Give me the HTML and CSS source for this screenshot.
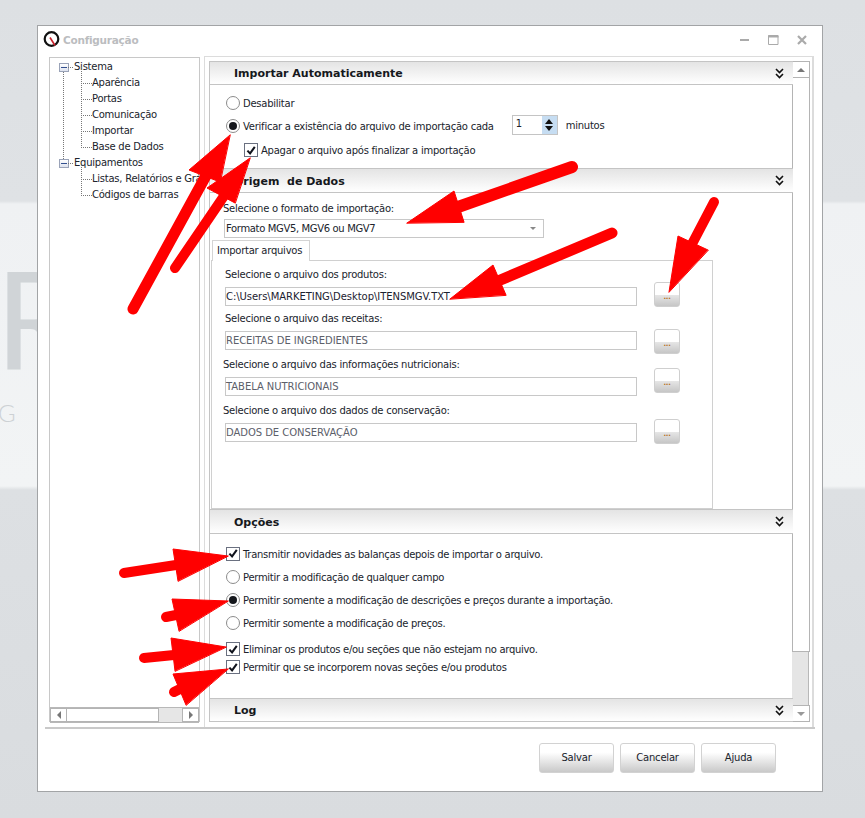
FILE: index.html
```html
<!DOCTYPE html>
<html lang="pt-BR">
<head>
<meta charset="utf-8">
<title>Configuração</title>
<link rel="stylesheet" href="styles.css">
</head>
<body>
<svg class="defs" width="0" height="0">
  <symbol id="chev" viewBox="0 0 9 11"><path d="M1 1l3.5 3.5L8 1M1 6l3.5 3.5L8 6" fill="none" stroke="#111" stroke-width="1.6"/></symbol>
  <symbol id="tick" viewBox="0 0 13 13"><path d="M2.6 6.6l2.9 3L10.6 2.6" fill="none" stroke="#10131c" stroke-width="2.2"/></symbol>
</svg>
<div class="logo-r">R</div>
<div class="logo-g">G I</div>
<div class="window">
  <div class="titlebar">
    <svg class="app-icon" width="17" height="17" viewBox="0 0 17 17"><circle cx="8.5" cy="8" r="6.8" fill="none" stroke="#111" stroke-width="2.2"/><path d="M7 6.5l5 8" stroke="#c8202a" stroke-width="1.6"/></svg>
    <span class="title">Configuração</span>
    <div class="controls">
      <svg width="10" height="10" viewBox="0 0 10 10"><path d="M0 5h9" stroke="#aaa" stroke-width="2"/></svg>
      <svg width="11" height="10" viewBox="0 0 11 10"><path d="M.5 .5h9.5v9H.5z" fill="none" stroke="#aaa"/><path d="M0 1.5h10.5" stroke="#aaa" stroke-width="2"/></svg>
      <svg width="10" height="10" viewBox="0 0 10 10"><path d="M1 1l8 8M9 1l-8 8" stroke="#aaa" stroke-width="2.2"/></svg>
    </div>
  </div>
  <div class="main">
    <aside class="tree-panel">
      <ul class="tree">
        <li class="root root-open"><span class="node"><i class="minus"></i>Sistema</span>
          <ul>
            <li>Aparência</li><li>Portas</li><li>Comunicação</li><li>Importar</li><li>Base de Dados</li>
          </ul>
        </li>
        <li class="root"><span class="node"><i class="minus"></i>Equipamentos</span>
          <ul>
            <li>Listas, Relatórios e Gráficos</li><li>Códigos de barras</li>
          </ul>
        </li>
      </ul>
      <div class="hscroll">
        <span class="sbtn"><i class="tri tri-l"></i></span>
        <span class="hthumb"></span>
        <span class="htrack"></span>
        <span class="sbtn"><i class="tri tri-r"></i></span>
      </div>
    </aside>
    <section class="panel">
      <div class="sections">
        <header class="shead shead-short">Importar Automaticamente<svg class="chev" width="9" height="11"><use href="#chev"/></svg></header>
        <div class="sbody body-import">
          <label class="row"><i class="radio"></i>Desabilitar</label>
          <div class="row">
            <i class="radio on"></i>Verificar a existência do arquivo de importação cada
            <span class="spin"><span class="spin-val">1</span><span class="spin-btn"><i class="tri tri-u"></i><i class="tri tri-d"></i></span></span>
            <span class="unit">minutos</span>
          </div>
          <label class="row row-sub"><i class="check"><svg width="13" height="13"><use href="#tick"/></svg></i>Apagar o arquivo após finalizar a importação</label>
        </div>
        <header class="shead">Origem&nbsp; de Dados<svg class="chev" width="9" height="11"><use href="#chev"/></svg></header>
        <div class="sbody body-origem">
          <div class="label combo-label">Selecione o formato de importação:</div>
          <div class="combo">Formato MGV5, MGV6 ou MGV7<i class="combo-arrow"></i></div>
          <div class="tab">Importar arquivos</div>
          <div class="tab-panel">
            <div class="file f1">
              <div class="file-col"><div class="label">Selecione o arquivo dos produtos:</div><div class="input dark">C:\Users\MARKETING\Desktop\ITENSMGV.TXT</div></div>
              <button class="browse b1"><span>...</span></button>
            </div>
            <div class="file f2">
              <div class="file-col"><div class="label">Selecione o arquivo das receitas:</div><div class="input">RECEITAS DE INGREDIENTES</div></div>
              <button class="browse b2"><span>...</span></button>
            </div>
            <div class="file f3">
              <div class="file-col"><div class="label shift">Selecione o arquivo das informações nutricionais:</div><div class="input">TABELA NUTRICIONAIS</div></div>
              <button class="browse b3"><span>...</span></button>
            </div>
            <div class="file f3">
              <div class="file-col"><div class="label shift">Selecione o arquivo dos dados de conservação:</div><div class="input">DADOS DE CONSERVAÇÃO</div></div>
              <button class="browse b4"><span>...</span></button>
            </div>
          </div>
        </div>
        <header class="shead">Opções<svg class="chev" width="9" height="11"><use href="#chev"/></svg></header>
        <div class="sbody body-opcoes">
          <label class="row"><i class="check"><svg width="13" height="13"><use href="#tick"/></svg></i>Transmitir novidades as balanças depois de importar o arquivo.</label>
          <label class="row"><i class="radio"></i>Permitir a modificação de qualquer campo</label>
          <label class="row"><i class="radio on"></i>Permitir somente a modificação de descrições e preços durante a importação.</label>
          <label class="row"><i class="radio"></i>Permitir somente a modificação de preços.</label>
          <label class="row row-tight first-tight"><i class="check"><svg width="13" height="13"><use href="#tick"/></svg></i>Eliminar os produtos e/ou seções que não estejam no arquivo.</label>
          <label class="row row-tight"><i class="check"><svg width="13" height="13"><use href="#tick"/></svg></i>Permitir que se incorporem novas seções e/ou produtos</label>
        </div>
        <header class="shead shead-short">Log<svg class="chev" width="9" height="11"><use href="#chev"/></svg></header>
      </div>
      <div class="vscroll">
        <span class="sbtn sbtn-v"><i class="tri tri-up-g"></i></span>
        <span class="vthumb"></span>
        <span class="vtrack"></span>
        <span class="sbtn sbtn-v"><i class="tri tri-dn-g"></i></span>
      </div>
    </section>
  </div>
  <footer class="actions">
    <button class="btn">Salvar</button>
    <button class="btn">Cancelar</button>
    <button class="btn">Ajuda</button>
  </footer>
</div>
<svg class="arrows" width="865" height="818" viewBox="0 0 865 818">
  <g fill="#ff0000" stroke="#ff0000" stroke-linecap="round">
    <path d="M133 309L208 172" stroke-width="11" fill="none"/><path d="M230 135L189 170L220 182Z" stroke-width="1"/>
    <path d="M175 268L224 196" stroke-width="10" fill="none"/><path d="M250 158L207 188L235 203Z" stroke-width="1"/>
    <path d="M572 167L458 207" stroke-width="12" fill="none"/><path d="M407 223L454 191L464 222Z" stroke-width="1"/>
    <path d="M612 233L498 281" stroke-width="11" fill="none"/><path d="M450 299L493 265L506 295Z" stroke-width="1"/>
    <path d="M714 202L692 244" stroke-width="10" fill="none"/><path d="M669 292L678 236L708 250Z" stroke-width="1"/>
    <path d="M124 573L176 565" stroke-width="10" fill="none"/><path d="M228 556L173 549L178 581Z" stroke-width="1"/>
    <path d="M166 617L176 615" stroke-width="10" fill="none"/><path d="M228 601L172 599L179 631Z" stroke-width="1"/>
    <path d="M144 658L174 655" stroke-width="10" fill="none"/><path d="M226 647L171 638L175 671Z" stroke-width="1"/>
    <path d="M174 692L182 688" stroke-width="10" fill="none"/><path d="M228 669L173 674L186 705Z" stroke-width="1"/>
  </g>
</svg>
</body>
</html>
```
FILE: styles.css
```css
* { box-sizing: border-box; }
html, body { margin: 0; height: 818px; overflow: hidden; }
body {
  position: relative;
  font: 10px/16px "DejaVu Sans", sans-serif;
  letter-spacing: -0.25px;
  color: #20242c;
  background: linear-gradient(#dde0e3 0, #dfe2e5 201px, #eff1f3 204px, #f2f4f5 486px, #dde0e3 490px, #d9dcdf 818px);
}
i { font-style: normal; }
.defs { position: absolute; }
.logo-r {
  position: absolute; left: -5px; top: 238px;
  font: 400 136px/160px Lato, sans-serif; color: #d0d4d7;
}
.logo-g {
  position: absolute; left: -2px; top: 400px;
  font: 300 24px/26px Lato, sans-serif; letter-spacing: 7px; color: #cdd1d4;
}
.window {
  position: relative;
  margin: 25px 0 0 37px;
  width: 786px; height: 767px;
  background: #fff;
  border: 1px solid #a2a4a6;
  display: flex; flex-direction: column;
}
.titlebar { height: 30px; display: flex; align-items: center; padding: 0 15px 0 5px; }
.app-icon { margin-top: -3px; }
.title { margin-left: 3px; font-weight: 700; color: #bbbdbf; font-size: 10.5px; margin-top: -3px; }
.controls { margin-left: auto; display: flex; gap: 18px; margin-top: -2px; }
.main { display: flex; margin-left: 7px; width: 770px; height: 673px; border-bottom: 2px solid #c9c9c9; }
.tree-panel {
  margin: 1px 0 0 4px; width: 151px; height: 665px;
  border: 1px solid #c8c8c8; border-bottom: 0;
  display: flex; flex-direction: column;
}
.tree { list-style: none; margin: 0; padding: 1px 0 0 9px; flex: 1; overflow: hidden; white-space: nowrap; }
.tree ul { list-style: none; margin: 0 0 0 22px; padding: 0; }
.tree .root { position: relative; }
.root-open::before { content: ""; position: absolute; left: 4px; top: 12px; height: 92px; border-left: 1px dotted #777; }
.node { display: flex; align-items: center; height: 16px; }
.minus {
  width: 10px; height: 9px; margin-right: 5px; position: relative;
  border: 1px solid #9aa3b8; background: linear-gradient(#fff, #dde2ee);
}
.minus::before { content: ""; position: absolute; left: 1px; right: 1px; top: 3px; height: 1px; background: #33508f; }
.minus::after { content: ""; position: absolute; left: 8px; top: 3px; width: 5px; border-top: 1px dotted #777; }
.tree ul li { position: relative; height: 16px; padding-left: 11px; }
.tree ul li::before { content: ""; position: absolute; left: 0; top: -8px; width: 10px; height: 16px; border-left: 1px dotted #777; border-bottom: 1px dotted #777; }
.hscroll { display: flex; height: 16px; border: 1px solid #b8b8b8; border-width: 1px 0 1px 0; background: #e6e6e6; margin: 0 0 -1px; }
.sbtn { display: flex; align-items: center; justify-content: center; width: 17px; background: #fff; border: 1px solid #b4b4b4; flex: none; }
.hthumb { width: 92px; background: #fff; border: 1px solid #b4b4b4; border-left: 0; }
.htrack { flex: 1; }
.tri { display: block; width: 0; height: 0; border: 4px solid transparent; }
.tri-l { border-right-color: #777; border-left-width: 0; }
.tri-r { border-left-color: #777; border-right-width: 0; }
.tri-up-g { border-width: 0 4px 4px; border-bottom-color: #777; }
.tri-dn-g { border-width: 4px 4px 0; border-top-color: #999; }
.tri-u { border-width: 0 4px 5px; border-bottom-color: #111; margin-bottom: 2px; }
.tri-d { border-width: 5px 4px 0; border-top-color: #111; }

.panel {
  margin-left: 4px; width: 610px; height: 671px;
  padding: 4px 4px 5px 4px;
  border: 1px solid #dcdcdc; border-bottom: 0; border-right-width: 2px;
  display: flex;
}
.sections { width: 584px; flex: none; border-left: 1px solid #c4c4c4; }
.shead {
  position: relative;
  height: 25px; padding: 2px 0 0 24px;
  display: flex; align-items: center;
  font-weight: 700; font-size: 11px; letter-spacing: 0; color: #16181c;
  background: linear-gradient(#e4e4e4, #fff);
  border-top: 1px solid #c4c4c4; border-bottom: 1px solid #c4c4c4;
}
.shead-short { height: 24px; }
.chev { position: absolute; right: 9px; top: 6px; }
.sbody { border-right: 1px solid #c4c4c4; }
.body-import { height: 83px; padding-top: 6px; }
.body-origem { height: 316px; padding-top: 7px; }
.body-opcoes { height: 164px; padding-top: 8px; letter-spacing: -0.29px; }
.row { display: flex; align-items: center; height: 23px; padding: 2px 0 0 16px; }
.row-sub { height: 24px; padding-left: 34px; margin-top: 1px; }
.row-tight { height: 18px; }
.first-tight { margin-top: 6px; }
.radio {
  width: 14px; height: 14px; margin: -2px 3px 0 0; border-radius: 50%; flex: none;
  border: 1px solid #8c8c8c; background: #fff;
  display: flex; align-items: center; justify-content: center;
}
.radio.on::before { content: ""; width: 8px; height: 8px; border-radius: 50%; background: #15171c; }
.check {
  width: 14px; height: 14px; margin: -2px 3px 0 0; flex: none;
  border: 1px solid #6a7080; background: #fff;
  display: flex; align-items: center; justify-content: center;
}
.spin { margin: -4px 0 0 18px; width: 46px; height: 20px; border: 1px solid #c4c4c4; display: flex; justify-content: space-between; }
.spin-val { padding: 0 0 0 3px; line-height: 16px; }
.spin-btn { width: 15px; background: #c6ddf2; display: flex; flex-direction: column; align-items: center; justify-content: center; }
.unit { margin: -2px 0 0 8px; }
.label { height: 16px; padding: 1px 0 0 4px; }
.combo-label { padding-left: 13px; }
.combo {
  position: relative; margin: 3px 0 0 14px; width: 320px; height: 19px; line-height: 17px;
  padding-left: 1px; border: 1px solid #c8c8c8; letter-spacing: -0.35px;
}
.combo-arrow { position: absolute; right: 7px; top: 7px; border: 3px solid transparent; border-top: 3px solid #888; border-bottom: 0; }
.tab {
  margin: 2px 0 0 2px; width: 98px; height: 21px; line-height: 19px; padding-left: 4px;
  border: 1px solid #d4d4d4; border-bottom: 0; background: #fff; position: relative; z-index: 1;
}
.tab-panel { margin: -1px 0 0 1px; width: 502px; height: 249px; border: 1px solid #d0d0d0; padding: 5px 0 0 12px; }
.file { display: flex; height: 40px; }
.f2 { margin-top: 4px; }
.f3 { margin-top: 6px; }
.file-col { width: 430px; }
.file-col .label { padding-left: 1px; height: 21px; }
.file-col .label.shift { padding-left: 0; margin-left: -1px; }
.input {
  margin-left: 1px;
  width: 412px; height: 19px; line-height: 17px; padding-left: 0;
  border: 1px solid #c8c8c8; color: #5c606a; letter-spacing: -0.05px;
}
.input.dark { color: #1c2230; }
.browse {
  width: 26px; height: 25px; padding: 5px 0 0; flex: none;
  border: 1px solid #cfcfcf; border-radius: 3px;
  background: linear-gradient(#fff 50%, #e6e6e6 52%, #c6c6c6);
  font: 700 7px/10px "DejaVu Sans", sans-serif; letter-spacing: -0.3px; color: #b8701c;
}
.b1 { margin-top: 16px; }
.b2 { margin-top: 19px; }
.b3 { margin-top: 12px; }
.b4 { margin-top: 17px; }
.vscroll { width: 17px; flex: none; display: flex; flex-direction: column; background: #e5e5e5; border-right: 1px solid #b8b8b8; margin-left: -1px; }
.sbtn-v { height: 17px; width: 18px; }
.vthumb { height: 574px; background: #fff; border: 1px solid #b4b4b4; border-top: 0; width: 18px; }
.vtrack { flex: 1; }
.actions { display: flex; gap: 6px; justify-content: flex-end; padding: 14px 46px 0 0; }
.btn {
  width: 75px; height: 30px; padding: 0;
  border: 1px solid #d2d2d2; border-radius: 3px;
  background: linear-gradient(#fff 30%, #c9c9c9);
  font: 10px/16px "DejaVu Sans", sans-serif; letter-spacing: -0.2px; color: #20242c;
}
.arrows { position: absolute; left: 0; top: 0; pointer-events: none; }
```
